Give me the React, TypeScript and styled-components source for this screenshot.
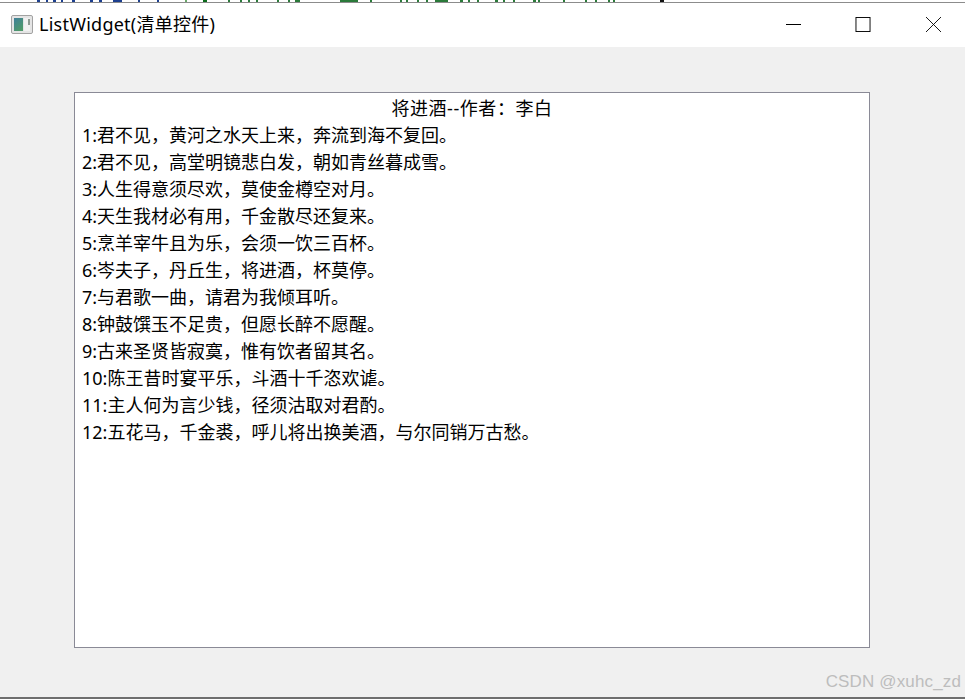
import styled, { createGlobalStyle } from 'styled-components';

const FONT = '"Noto Sans", "Noto Sans CJK SC", sans-serif';

const poem = [
    '1:君不见，黄河之水天上来，奔流到海不复回。',
    '2:君不见，高堂明镜悲白发，朝如青丝暮成雪。',
    '3:人生得意须尽欢，莫使金樽空对月。',
    '4:天生我材必有用，千金散尽还复来。',
    '5:烹羊宰牛且为乐，会须一饮三百杯。',
    '6:岑夫子，丹丘生，将进酒，杯莫停。',
    '7:与君歌一曲，请君为我倾耳听。',
    '8:钟鼓馔玉不足贵，但愿长醉不愿醒。',
    '9:古来圣贤皆寂寞，惟有饮者留其名。',
    '10:陈王昔时宴平乐，斗酒十千恣欢谑。',
    '11:主人何为言少钱，径须沽取对君酌。',
    '12:五花马，千金裘，呼儿将出换美酒，与尔同销万古愁。',
];

// bits of the window behind, cut off by the title bar
const scraps = [
    [37, 40, '#1c3f8f'], [46, 48, '#1c3f8f'], [53, 56, '#1c3f8f'], [61, 63, '#1c3f8f'], [72, 75, '#1c3f8f'],
    [90, 93, '#1c3f8f'], [99, 102, '#1c3f8f'], [113, 122, '#1c3f8f'], [138, 140, '#1c3f8f'], [157, 159, '#1c3f8f'],
    [185, 187, '#6aa86a'], [203, 207, '#0a6a1a'], [228, 230, '#2a7a3a'], [240, 242, '#2a7a3a'], [248, 250, '#2a7a3a'],
    [256, 258, '#2a7a3a'], [277, 279, '#2a7a3a'], [288, 290, '#2a7a3a'], [295, 300, '#2a7a3a'], [340, 358, '#2a7a3a'],
    [370, 372, '#2a7a3a'], [400, 402, '#2a7a3a'], [406, 408, '#2a7a3a'], [417, 419, '#2a7a3a'], [426, 428, '#2a7a3a'],
    [435, 448, '#2a7a3a'], [460, 463, '#2a7a3a'], [468, 470, '#2a7a3a'], [477, 479, '#2a7a3a'], [495, 498, '#2a7a3a'],
    [503, 505, '#2a7a3a'], [513, 515, '#2a7a3a'], [533, 536, '#2a7a3a'], [538, 540, '#2a7a3a'], [563, 565, '#2a7a3a'],
    [585, 587, '#2a7a3a'], [595, 597, '#2a7a3a'], [608, 610, '#2a7a3a'], [613, 615, '#2a7a3a'], [660, 664, '#111111'],
] as const;

export default function App() {
    return (
        <>
            <GlobalStyle />
            <Page>
                <BackStrip width={965} height={2}>
                    {scraps.map(([from, to, color]) => (
                        <rect key={from} x={from} y={0} width={to - from} height={2} fill={color} />
                    ))}
                </BackStrip>
                <TitleBar>
                    <WindowIcon viewBox="0 0 22 19">
                        <defs>
                            <linearGradient id="panel" x1="0" y1="0" x2="0.6" y2="1">
                                <stop offset="0" stopColor="#3f7f9a" />
                                <stop offset="1" stopColor="#4f9a6a" />
                            </linearGradient>
                        </defs>
                        <rect x="0.5" y="0.5" width="21" height="18" rx="1.5" fill="#e4e4e4" stroke="#a2a2a2" />
                        <rect x="3" y="3" width="9" height="13" fill="url(#panel)" />
                        <rect x="13" y="3" width="6" height="13" fill="#f1f1f1" />
                        <rect x="17" y="4" width="2" height="6" fill="#8f9a92" />
                    </WindowIcon>
                    <Title>ListWidget(清单控件)</Title>
                    <Controls>
                        <ControlIcon viewBox="0 0 15 15">
                            <path d="M0 7.5H15" stroke="#000" fill="none" />
                        </ControlIcon>
                        <MaximizeIcon viewBox="0 0 16 16">
                            <rect x="0.5" y="0.5" width="15" height="15" stroke="#000" fill="none" />
                        </MaximizeIcon>
                        <ControlIcon viewBox="0 0 15 15">
                            <path d="M0 0L15 15M15 0L0 15" stroke="#000" strokeWidth="0.9" fill="none" />
                        </ControlIcon>
                    </Controls>
                </TitleBar>
                <Content>
                    <ListBox>
                        <ListHeader>将进酒--作者：李白</ListHeader>
                        {poem.map(line => (
                            <ListItem key={line}>{line}</ListItem>
                        ))}
                    </ListBox>
                </Content>
                <Watermark>CSDN @xuhc_zd</Watermark>
            </Page>
        </>
    );
}

const GlobalStyle = createGlobalStyle`
    html, body {
        margin: 0;
        padding: 0;
        background: #f0f0f0;
    }
`;

const Page = styled.div`
    position: relative;
    display: flex;
    flex-direction: column;
    width: 965px;
    height: 699px;
    overflow: hidden;
    background: #f0f0f0;
    font-family: ${FONT};
    color: #000;
    border-bottom: 2px solid #6e6e6e;
    box-sizing: border-box;
`;

const BackStrip = styled.svg`
    display: block;
    flex: none;
    background: #fff;
`;

const TitleBar = styled.div`
    flex: none;
    display: flex;
    align-items: center;
    height: 45px;
    padding: 0 24px 1px 11px;
    background: #fff;
    border-top: 1px solid #8c8c8c;
    box-sizing: border-box;
`;

const WindowIcon = styled.svg`
    width: 22px;
    height: 19px;
    margin-right: 6px;
`;

const Title = styled.div`
    font-size: 18px;
    line-height: 24px;
    letter-spacing: 0.25px;
    margin-bottom: 1px;
`;

const Controls = styled.div`
    display: flex;
    align-items: center;
    gap: 55px;
    margin-left: auto;
`;

const ControlIcon = styled.svg`
    display: block;
    width: 15px;
    height: 15px;
`;

const MaximizeIcon = styled(ControlIcon)`
    width: 16px;
    margin-left: -1px;
`;

const Content = styled.div`
    flex: 1;
    padding: 45px 95px 49px 74px;
    min-height: 0;
`;

const ListBox = styled.div`
    height: 100%;
    padding: 2px 7px;
    background: #fff;
    border: 1px solid #8a8a96;
    box-sizing: border-box;
`;

const ListHeader = styled.div`
    height: 27px;
    font-size: 18px;
    line-height: 27px;
    letter-spacing: 0.55px;
    text-align: center;
`;

const ListItem = styled.div`
    height: 27px;
    font-size: 18px;
    line-height: 27px;
    white-space: nowrap;
`;

const Watermark = styled.div`
    position: absolute;
    right: 4px;
    bottom: 5px;
    font-family: "Liberation Sans", sans-serif;
    font-size: 17px;
    line-height: 20px;
    letter-spacing: 0.14px;
    color: #bdbdbd;
`;
